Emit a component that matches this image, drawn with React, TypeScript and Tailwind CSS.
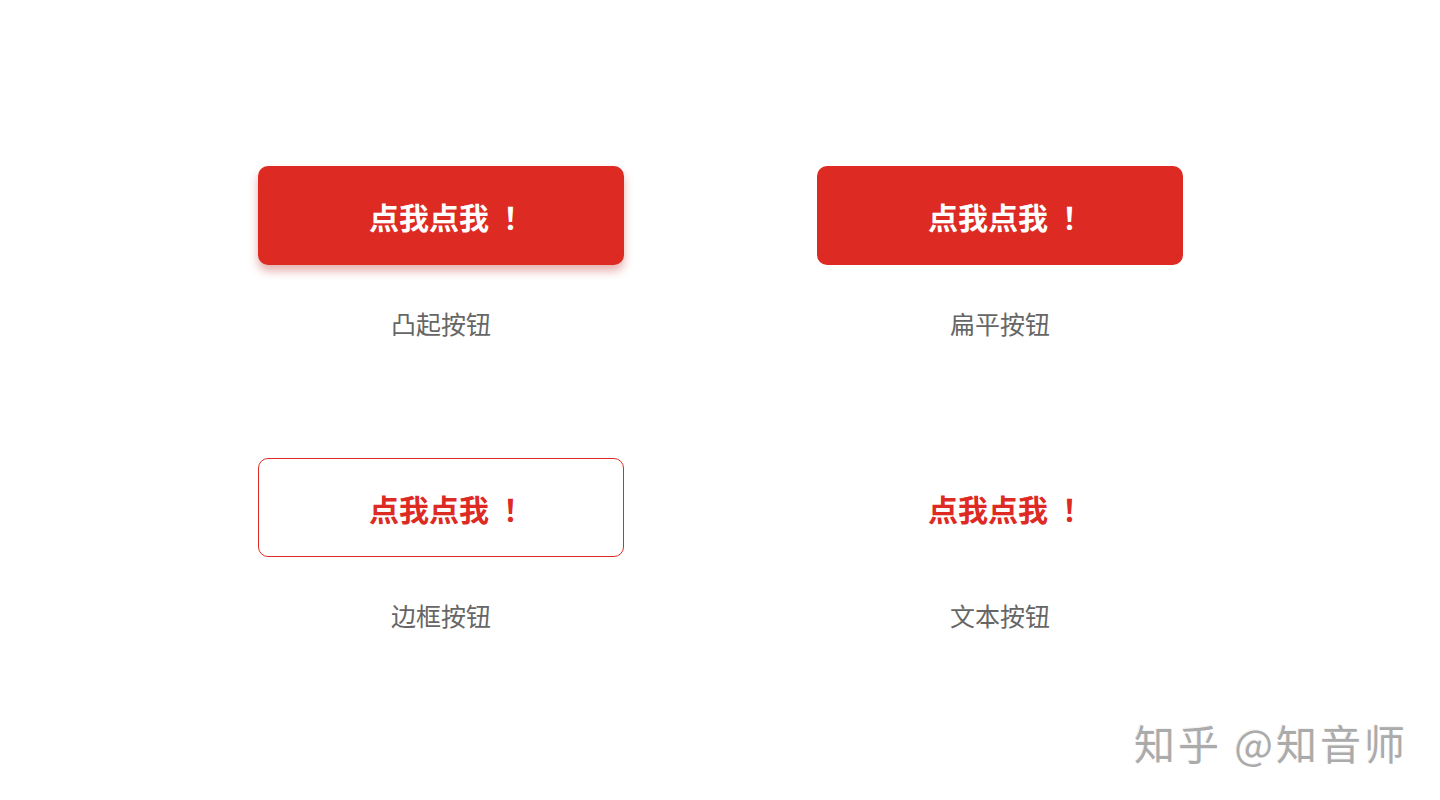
import React from 'react';

type Variant = 'raised' | 'flat' | 'outline' | 'text';

const items: { variant: Variant; label: string }[] = [
  { variant: 'raised', label: '凸起按钮' },
  { variant: 'flat', label: '扁平按钮' },
  { variant: 'outline', label: '边框按钮' },
  { variant: 'text', label: '文本按钮' },
];

const base =
  'w-[366px] h-[99px] rounded-[10px] flex items-center justify-center pl-[20px] pt-[1px] text-[30px] leading-none font-bold';

const variantClass: Record<Variant, string> = {
  raised: 'bg-[#dd2a23] text-white shadow-[0_6px_10px_rgba(180,30,20,0.35)]',
  flat: 'bg-[#dd2a23] text-white',
  outline: 'border-[1.5px] border-[#dd2a23] text-[#dd2a23] bg-white',
  text: 'text-[#dd2a23] bg-transparent',
};

function DemoButton({ variant }: { variant: Variant }) {
  return (
    <button className={`${base} ${variantClass[variant]}`}>
      <span>点我点我</span>
      <span className="ml-[14px]">！</span>
    </button>
  );
}

export default function App() {
  return (
    <div
      className="relative w-[1440px] h-[800px] bg-white overflow-hidden"
      style={{ fontFamily: '"Noto Sans CJK SC", "Noto Sans", sans-serif' }}
    >
      <div className="grid grid-cols-[366px_366px] gap-x-[193px] gap-y-[117px] pl-[258px] pt-[166px]">
        {items.map((item) => (
          <div key={item.label} className="flex flex-col items-center gap-[40px]">
            <DemoButton variant={item.variant} />
            <span className="text-[25px] leading-[36px] text-[#666666]">{item.label}</span>
          </div>
        ))}
      </div>

      {/* watermark */}
      <div className="absolute left-[1134px] top-[714px] text-[41px] leading-[56px] text-[#ababab] tracking-[3px] [text-shadow:-1px_-1px_0_#f4f4f4]">
        知乎 @知音师
      </div>
    </div>
  );
}
